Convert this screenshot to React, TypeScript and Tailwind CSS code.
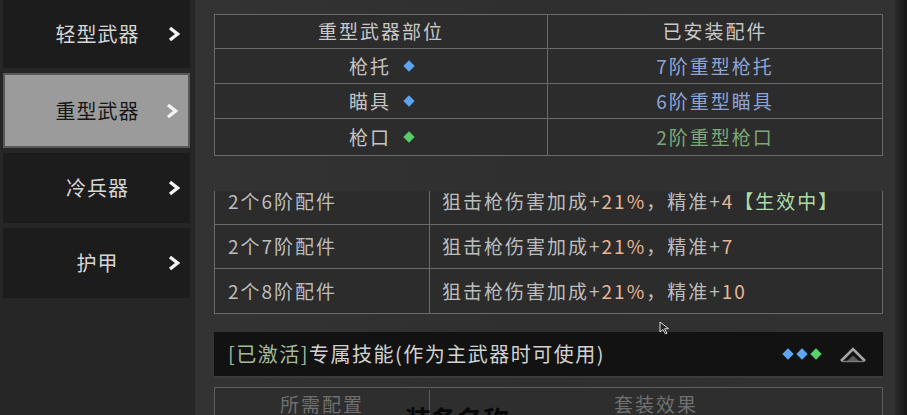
import React from 'react';

type Part = { text: string; tone?: 'hi' | 'on' };

const NAV = [
  { label: '轻型武器', h: 'h-[68px]' },
  { label: '重型武器', h: 'h-[75px]', active: true },
  { label: '冷兵器', h: 'h-[70px]' },
  { label: '护甲', h: 'h-[70px]' },
];

const SLOTS = [
  { part: '枪托', gem: '#5aa4f2', item: '7阶重型枪托', color: 'text-[#8ea4d6]', h: 'h-[35px]' },
  { part: '瞄具', gem: '#5aa4f2', item: '6阶重型瞄具', color: 'text-[#8ea4d6]', h: 'h-[35px]' },
  { part: '枪口', gem: '#55cc6a', item: '2阶重型枪口', color: 'text-[#7fa878]', h: 'h-[36px]' },
];

const SETS: { need: string; effect: Part[] }[] = [
  {
    need: '2个6阶配件',
    effect: [
      { text: '狙击枪伤害加成+' },
      { text: '21%', tone: 'hi' },
      { text: '，精准+' },
      { text: '4', tone: 'hi' },
      { text: '【生效中】', tone: 'on' },
    ],
  },
  {
    need: '2个7阶配件',
    effect: [
      { text: '狙击枪伤害加成+' },
      { text: '21%', tone: 'hi' },
      { text: '，精准+' },
      { text: '7', tone: 'hi' },
    ],
  },
  {
    need: '2个8阶配件',
    effect: [
      { text: '狙击枪伤害加成+' },
      { text: '21%', tone: 'hi' },
      { text: '，精准+' },
      { text: '10', tone: 'hi' },
    ],
  },
];

function Chevron() {
  return (
    <svg viewBox="0 0 12 16" className="h-[16px] w-[12px]" aria-hidden="true">
      <polyline points="2,2 9.5,8 2,14" fill="none" stroke="#f3f3f3" strokeWidth="3.4" />
    </svg>
  );
}

function Gem({ color, size = 'h-[7px] w-[7px]' }: { color: string; size?: string }) {
  return <span className={`inline-block ${size} rotate-45`} style={{ backgroundColor: color }} />;
}

function Sidebar() {
  return (
    <div className="flex w-[195px] shrink-0 flex-col gap-[5px] bg-[#262626] pl-[3px] pr-[5px]">
      {NAV.map((n) => (
        <div
          key={n.label}
          className={`relative flex ${n.h} items-center justify-center text-[20px] tracking-[1px] ${
            n.active
              ? 'border-2 border-[#585858] bg-[#9b9b9b] text-[#161616]'
              : 'bg-[#1d1c1c] text-[#d6d6d6]'
          }`}
        >
          <span className="pl-[2px]">{n.label}</span>
          <span className="absolute right-[10px] top-1/2 -translate-y-1/2">
            <Chevron />
          </span>
        </div>
      ))}
    </div>
  );
}

function SlotTable() {
  return (
    <div className="border border-[#6a6a6a] bg-[#2c2c2c] text-[19px] tracking-[2px]">
      <div className="grid h-[34px] grid-cols-[333px_1fr] border-b border-[#6a6a6a] text-[#c9c9c9]">
        <div className="flex items-center justify-center border-r border-[#6a6a6a]">重型武器部位</div>
        <div className="flex items-center justify-center">已安装配件</div>
      </div>
      {SLOTS.map((s, i) => (
        <div
          key={s.part}
          className={`grid ${s.h} grid-cols-[333px_1fr] ${i < SLOTS.length - 1 ? 'border-b border-[#6a6a6a]' : ''}`}
        >
          <div className="flex items-center justify-center gap-[14px] border-r border-[#6a6a6a] text-[#c4c4c4]">
            <span>{s.part}</span>
            <Gem color={s.gem} size="h-[8px] w-[8px]" />
          </div>
          <div className={`flex items-center justify-center ${s.color}`}>{s.item}</div>
        </div>
      ))}
    </div>
  );
}

function SetTable() {
  return (
    <div className="border-x border-b border-[#6a6a6a] bg-[#2c2c2c] text-[19px] tracking-[2px] text-[#bdbdbd]">
      {SETS.map((s, i) => (
        <div
          key={s.need}
          className={`grid grid-cols-[215px_1fr] ${i === 0 ? 'h-[34px] items-start' : 'h-[44px] items-center'} ${
            i < SETS.length - 1 ? 'border-b border-[#6a6a6a]' : ''
          }`}
        >
          <div className="flex h-full items-center border-r border-[#6a6a6a] pl-[13px]">
            <span className={i === 0 ? '-mt-[14px] leading-[20px]' : ''}>{s.need}</span>
          </div>
          <div className="flex h-full items-center pl-[12px]">
            <span className={i === 0 ? '-mt-[14px] leading-[20px]' : ''}>
              {s.effect.map((p, j) => (
                <span
                  key={j}
                  className={p.tone === 'hi' ? 'text-[#e9b595]' : p.tone === 'on' ? 'text-[#aedba6]' : ''}
                >
                  {p.text}
                </span>
              ))}
            </span>
          </div>
        </div>
      ))}
    </div>
  );
}

function SkillBar() {
  return (
    <div className="flex h-[46px] items-center border-b-2 border-[#3c3c3c] bg-[#121212] pl-[14px] pr-[16px] text-[20px] tracking-[1.5px]">
      <span className="text-[#a2bb9c]">[已激活]</span>
      <span className="text-[#d2d2d2]">专属技能(作为主武器时可使用)</span>
      <div className="ml-auto flex items-center gap-[6px]">
        <Gem color="#5ea6f4" size="h-[8px] w-[8px]" />
        <Gem color="#5ea6f4" size="h-[8px] w-[8px]" />
        <Gem color="#5ad06c" size="h-[8px] w-[8px]" />
        <svg viewBox="0 0 28 17" className="ml-[13px] h-[17px] w-[28px]" aria-hidden="true">
          <polyline points="2,15 14,3 26,15" fill="none" stroke="#a6a6a6" strokeWidth="2.6" />
          <polygon points="8,15 14,9.5 20,15" fill="#5c5c5c" />
          <line x1="3" y1="15.5" x2="25" y2="15.5" stroke="#7a7a7a" strokeWidth="1.4" />
        </svg>
      </div>
    </div>
  );
}

function BottomTable() {
  return (
    <div className="grid grid-cols-[215px_1fr] border-x border-t border-[#5e5e5e] bg-[#2e2e2e] pt-[2px] text-[19px] tracking-[2px] text-[#707070]">
      <div className="flex h-[30px] items-start justify-center border-r border-[#5e5e5e]">所需配置</div>
      <div className="flex h-[30px] items-start justify-center">套装效果</div>
    </div>
  );
}

export default function App() {
  return (
    <div className="relative flex h-[415px] w-[907px] overflow-hidden bg-[#1c1c1c] font-['Noto_Sans_CJK_SC','Noto_Sans',sans-serif]">
      <Sidebar />
      <div className="flex w-[700px] shrink-0 flex-col bg-gradient-to-r from-[#333333] via-[#2f2f2f] to-[#323232] pl-[19px] pr-[12px] pt-[14px]">
        <SlotTable />
        <div className="mt-[35px]">
          <SetTable />
        </div>
        <div className="mt-[18px]">
          <SkillBar />
        </div>
        <div className="mt-[9px]">
          <BottomTable />
        </div>
      </div>
      <div className="flex-1 bg-gradient-to-r from-[#2a2a2a] to-[#161616]" />

      {/* black title text overlapping the bottom edge */}
      <div className="absolute left-[405px] top-[406px] text-[26px] font-bold leading-none text-[#080808]">
        装备名称
      </div>

      {/* mouse cursor */}
      <svg viewBox="0 0 12 14" className="absolute left-[659px] top-[321px] h-[14px] w-[12px]" aria-hidden="true">
        <path d="M1 1 L1 11 L4 8.5 L6.5 13 L8 12.2 L5.6 7.8 L9.5 7.6 Z" fill="#222" stroke="#dcdcdc" strokeWidth="1" />
      </svg>
    </div>
  );
}
